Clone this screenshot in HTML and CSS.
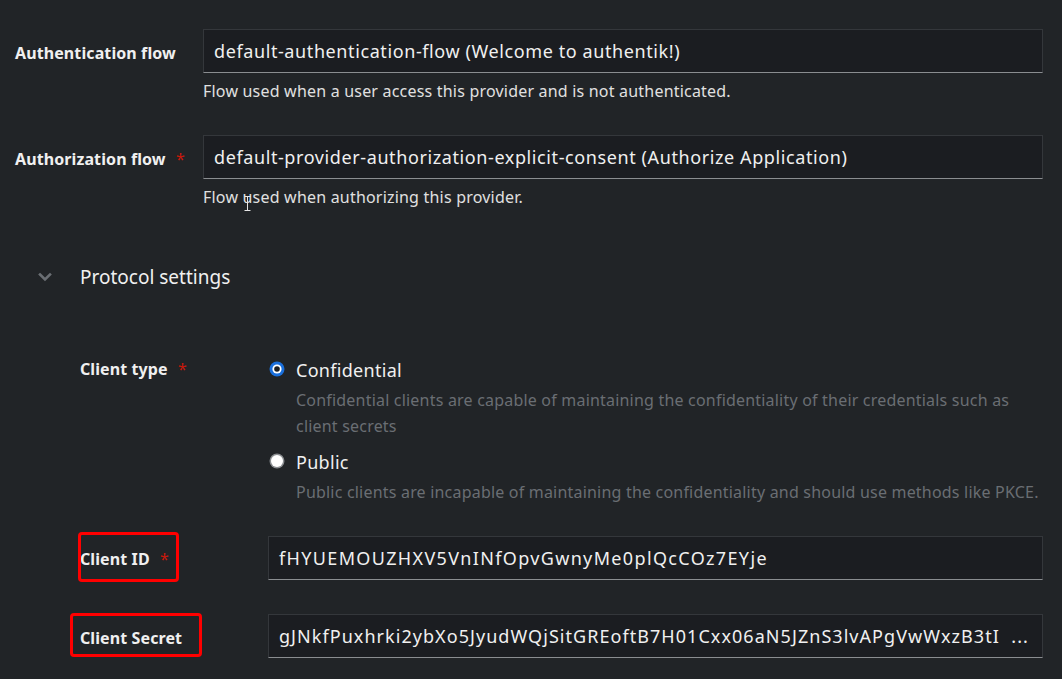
FILE: index.html
```html
<!DOCTYPE html>
<html lang="en">
<head>
<meta charset="utf-8">
<title>Provider settings</title>
<link rel="stylesheet" href="styles.css">
</head>
<body>
<main class="form">
  <div class="row row-flow">
    <label class="label">Authentication flow</label>
    <div class="control">
      <div class="input">default-authentication-flow (Welcome to authentik!)</div>
      <p class="helper">Flow used when a user access this provider and is not authenticated.</p>
    </div>
  </div>
  <div class="row row-flow">
    <label class="label">Authorization flow <span class="req">*</span></label>
    <div class="control">
      <div class="input">default-provider-authorization-explicit-consent (Authorize Application)</div>
      <p class="helper helper-cursor">Flow used when authorizing this provider.<svg class="ibeam" width="7" height="15" viewBox="0 0 7 15"><path d="M0.5 0.5h6M3.5 0.5v14M0.5 14.5h6" stroke="#e6e6e6" stroke-width="1" fill="none"/></svg></p>
    </div>
  </div>

  <section class="group">
    <div class="group-head">
      <svg class="chev" width="14" height="10" viewBox="0 0 14 10"><path d="M2 2.5l5 5 5-5" stroke="#6a6e73" stroke-width="2.6" fill="none" stroke-linecap="square"/></svg>
      <span class="group-title">Protocol settings</span>
    </div>

    <div class="group-body">
      <div class="row row-radio">
        <label class="label">Client type <span class="req">*</span></label>
        <div class="control">
          <div class="radio">
            <svg class="radio-icon" width="16" height="16" viewBox="0 0 16 16"><circle cx="8" cy="8" r="7.5" fill="#1a6fdc"/><circle cx="8" cy="8" r="4.6" fill="#ffffff"/><circle cx="8" cy="8" r="2.8" fill="#1b1d21"/></svg>
            <span class="radio-label">Confidential</span>
          </div>
          <p class="radio-desc">Confidential clients are capable of maintaining the confidentiality of their credentials such as client secrets</p>
          <div class="radio">
            <svg class="radio-icon" width="16" height="16" viewBox="0 0 16 16"><circle cx="8" cy="8" r="7.5" fill="#8a8d90"/><circle cx="8" cy="8" r="6" fill="#ffffff"/></svg>
            <span class="radio-label">Public</span>
          </div>
          <p class="radio-desc nowrap">Public clients are incapable of maintaining the confidentiality and should use methods like PKCE.</p>
        </div>
      </div>

      <div class="row row-client">
        <label class="label"><span class="mark mark-id"></span>Client ID <span class="req">*</span></label>
        <div class="control">
          <div class="input input-key">fHYUEMOUZHXV5VnINfOpvGwnyMe0plQcCOz7EYje</div>
        </div>
      </div>

      <div class="row row-secret">
        <label class="label"><span class="mark mark-secret"></span>Client Secret</label>
        <div class="control">
          <div class="input input-key input-secret">gJNkfPuxhrki2ybXo5JyudWQjSitGREoftB7H01Cxx06aN5JZnS3lvAPgVwWxzB3tI&nbsp; ...</div>
        </div>
      </div>
    </div>
  </section>
</main>
</body>
</html>
```

FILE: styles.css
```css
* { box-sizing: border-box; }

html, body {
  margin: 0;
  height: 100%;
}

body {
  background: #212427;
  color: #f0f0f0;
  font-family: "Noto Sans", "Liberation Sans", sans-serif;
  overflow: hidden;
}

.form {
  padding: 29px 19px 0 15px;
}

.row {
  display: grid;
  grid-template-columns: 188px 1fr;
  align-items: start;
}

.row-flow + .row-flow {
  margin-top: 32px;
}

.label {
  position: relative;
  padding-top: 2px;
  font-weight: 700;
  font-size: 16px;
  letter-spacing: 0.1px;
  line-height: 44px;
  color: #f0f0f0;
  white-space: nowrap;
}

.req {
  color: #c9190b;
  font-weight: 400;
  margin-left: 6px;
}

.input {
  height: 44px;
  background: #1b1d21;
  border: 1px solid #34373b;
  border-bottom: 1px solid #8a8d90;
  padding: 0 10px;
  font-size: 18px;
  letter-spacing: 0.6px;
  line-height: 42px;
  color: #f0f0f0;
  white-space: nowrap;
  overflow: hidden;
}

.input-key {
  letter-spacing: 1.35px;
}

.input-secret {
  letter-spacing: 1.05px;
}

.helper {
  position: relative;
  margin: 6px 0 0;
  font-size: 16px;
  letter-spacing: 0.2px;
  line-height: 24px;
  color: #e0e0e0;
}

.ibeam {
  position: absolute;
  left: 41px;
  top: 11px;
}

.group {
  margin-top: 54px;
  padding-left: 22px;
}

.group-head {
  display: flex;
  align-items: center;
  height: 28px;
}

.chev {
  margin-left: 1px;
}

.group-title {
  margin-left: 28px;
  font-size: 19px;
  color: #f0f0f0;
}

.group-body {
  padding-left: 43px;
  margin-top: 65px;
}

.row-radio .label {
  padding-top: 0;
  margin-top: -1px;
  line-height: 28px;
}

.radio {
  display: flex;
  align-items: center;
  height: 28px;
}

.radio-icon {
  margin-left: 1px;
  margin-top: -2px;
}

.radio-label {
  margin-left: 11px;
  font-size: 18px;
  letter-spacing: 0.3px;
  color: #f0f0f0;
}

.radio-desc {
  margin: 3px 0 9px 28px;
  font-size: 16px;
  letter-spacing: 0.2px;
  line-height: 26px;
  color: #6a6e73;
}

.nowrap {
  white-space: nowrap;
}

.row-client {
  margin-top: 22px;
}

.row-client .label {
  padding-top: 1px;
}

.row-secret {
  margin-top: 33px;
}

.row-secret .label {
  padding-top: 2px;
}

.mark {
  position: absolute;
  border: 3px solid #ff0000;
  border-radius: 4px;
}

.mark-id {
  left: -2px;
  top: -4px;
  width: 101px;
  height: 50px;
}

.mark-secret {
  left: -10px;
  top: -1px;
  width: 132px;
  height: 44px;
}
```
